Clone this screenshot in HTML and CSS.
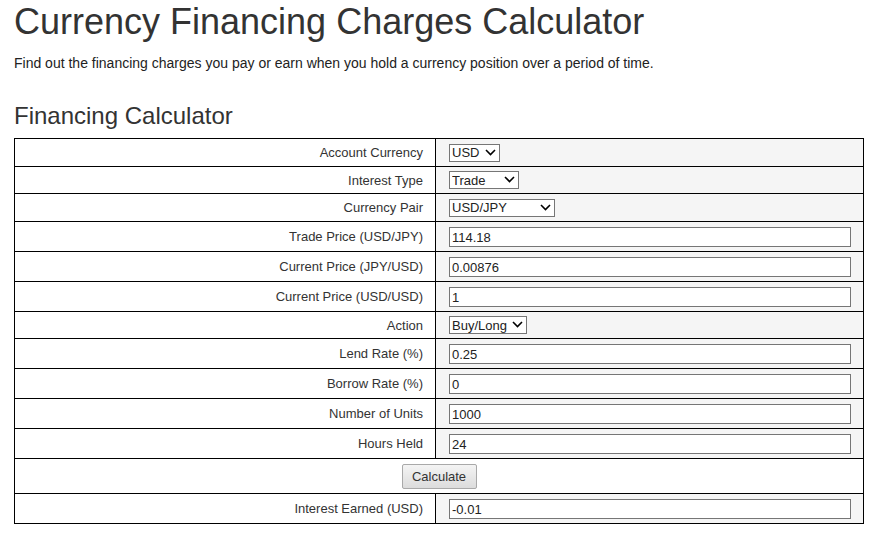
FILE: index.html
```html
<!DOCTYPE html>
<html>
<head>
<meta charset="utf-8">
<link rel="stylesheet" href="styles.css">
</head>
<body>
<div class="page">
  <h1 class="title">Currency Financing Charges Calculator</h1>
  <p class="intro">Find out the financing charges you pay or earn when you hold a currency position over a period of time.</p>
  <h2 class="subtitle">Financing Calculator</h2>
  <table class="calc">
    <tr class="row-sel">
      <td class="label">Account Currency</td>
      <td class="field"><span class="sel w-usd"><select><option>USD</option></select><svg class="chev" viewBox="0 0 11 7"><path d="M1 1 L5.5 5.5 L10 1" fill="none" stroke="#000" stroke-width="1.6"/></svg></span></td>
    </tr>
    <tr class="row-sel short">
      <td class="label">Interest Type</td>
      <td class="field"><span class="sel w-trade"><select><option>Trade</option></select><svg class="chev" viewBox="0 0 11 7"><path d="M1 1 L5.5 5.5 L10 1" fill="none" stroke="#000" stroke-width="1.6"/></svg></span></td>
    </tr>
    <tr class="row-sel">
      <td class="label">Currency Pair</td>
      <td class="field"><span class="sel w-pair"><select><option>USD/JPY</option></select><svg class="chev" viewBox="0 0 11 7"><path d="M1 1 L5.5 5.5 L10 1" fill="none" stroke="#000" stroke-width="1.6"/></svg></span></td>
    </tr>
    <tr>
      <td class="label">Trade Price (USD/JPY)</td>
      <td class="field"><input class="txt" type="text" value="114.18"></td>
    </tr>
    <tr>
      <td class="label">Current Price (JPY/USD)</td>
      <td class="field"><input class="txt" type="text" value="0.00876"></td>
    </tr>
    <tr>
      <td class="label">Current Price (USD/USD)</td>
      <td class="field"><input class="txt" type="text" value="1"></td>
    </tr>
    <tr class="row-sel short">
      <td class="label">Action</td>
      <td class="field"><span class="sel w-action"><select><option>Buy/Long</option></select><svg class="chev" viewBox="0 0 11 7"><path d="M1 1 L5.5 5.5 L10 1" fill="none" stroke="#000" stroke-width="1.6"/></svg></span></td>
    </tr>
    <tr>
      <td class="label">Lend Rate (%)</td>
      <td class="field"><input class="txt" type="text" value="0.25"></td>
    </tr>
    <tr>
      <td class="label">Borrow Rate (%)</td>
      <td class="field"><input class="txt" type="text" value="0"></td>
    </tr>
    <tr>
      <td class="label">Number of Units</td>
      <td class="field"><input class="txt" type="text" value="1000"></td>
    </tr>
    <tr>
      <td class="label">Hours Held</td>
      <td class="field"><input class="txt" type="text" value="24"></td>
    </tr>
    <tr class="row-btn">
      <td class="btn-cell" colspan="2"><button class="btn" type="button">Calculate</button></td>
    </tr>
    <tr>
      <td class="label">Interest Earned (USD)</td>
      <td class="field"><input class="txt" type="text" value="-0.01"></td>
    </tr>
  </table>
</div>
</body>
</html>
```

FILE: styles.css
```css
html, body {
  margin: 0;
  padding: 0;
  background: #fff;
}
body {
  font-family: "Liberation Sans", Arial, sans-serif;
  color: #333;
}
.page {
  padding: 0 14px;
}
.title {
  margin: 0;
  padding-top: 2px;
  font-size: 36px;
  font-weight: normal;
  line-height: 40px;
  color: #333;
}
.intro {
  margin: 12px 0 0;
  font-size: 14px;
  line-height: 18px;
  color: #222;
}
.subtitle {
  margin: 29px 0 0;
  font-size: 24px;
  font-weight: normal;
  line-height: 30px;
  color: #333;
}
.calc {
  margin-top: 7px;
  width: 850px;
  border-collapse: collapse;
  border: 1px solid #000;
}
.calc td {
  border: 1px solid #000;
  font-size: 13px;
  height: 30px;
  padding: 0 12px;
  box-sizing: border-box;
}
.calc tr.row-sel td {
  height: 28px;
}
.calc tr.row-sel.short td {
  height: 27px;
}
.calc .label {
  width: 421px;
  text-align: right;
  color: #333;
}
.calc .field {
  background: #f5f5f5;
  padding-left: 13px;
}
.txt {
  display: block;
  box-sizing: border-box;
  width: 402px;
  height: 20px;
  margin: 0;
  padding: 2px 2px 0;
  border: 1px solid #767676;
  border-radius: 0;
  background: #fff;
  font-family: "Liberation Sans", Arial, sans-serif;
  font-size: 13px;
  color: #222;
  outline: none;
}
.sel {
  position: relative;
  display: block;
  height: 18px;
}
.sel select {
  -webkit-appearance: none;
  appearance: none;
  box-sizing: border-box;
  width: 100%;
  height: 18px;
  margin: 0;
  padding: 0 0 0 2px;
  border: 1px solid #767676;
  border-radius: 0;
  background: #fff;
  font-family: "Liberation Sans", Arial, sans-serif;
  font-size: 13px;
  color: #222;
}
.sel .chev {
  position: absolute;
  right: 4px;
  top: 5px;
  width: 11px;
  height: 7px;
  pointer-events: none;
}
.w-usd { width: 51px; }
.w-trade { width: 70px; }
.w-pair { width: 106px; }
.w-action { width: 78px; }
.calc tr.row-btn td {
  height: 35px;
  text-align: center;
  background: #fff;
  padding: 0;
}
.btn {
  width: 75px;
  height: 25px;
  margin-top: 1px;
  border: 1px solid #a9a9a9;
  border-radius: 2px;
  background: linear-gradient(#f4f4f4, #dcdcdc);
  font-family: "Liberation Sans", Arial, sans-serif;
  font-size: 13px;
  color: #333;
  padding: 0;
}
```
